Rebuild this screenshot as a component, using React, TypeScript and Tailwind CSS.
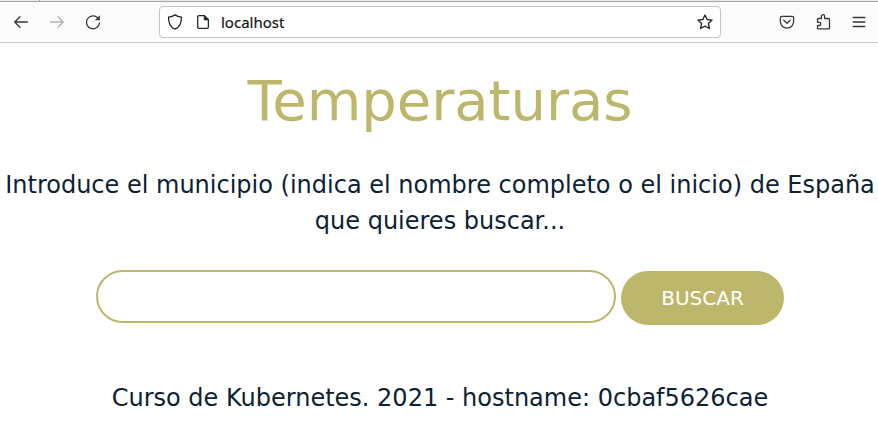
import React from "react";

type IconProps = { className?: string; children: React.ReactNode };

function Icon({ className = "", children }: IconProps) {
  return (
    <svg
      viewBox="0 0 16 16"
      fill="none"
      stroke="currentColor"
      strokeWidth="1.3"
      strokeLinecap="round"
      strokeLinejoin="round"
      className={`block size-4 shrink-0 ${className}`}
    >
      {children}
    </svg>
  );
}

function Toolbar() {
  return (
    <header className="flex h-[43px] items-center border-b border-[#c8c8cb] bg-[#fbfbfb] pt-px text-[#37373c]">
      <div className="flex w-[159px] shrink-0 items-center gap-5 pl-[13px]">
        <Icon>
          <path d="M14.4 8H1.7M7 2.7 1.7 8 7 13.3" />
        </Icon>
        <Icon className="text-[#b0b0b2]">
          <path d="M1.6 8h12.7M9 2.7 14.3 8 9 13.3" />
        </Icon>
        <Icon>
          <path d="M12.8 3.9A6.5 6.5 0 1 0 14.5 8.8" />
          <path d="M14.9 1.3v5H9.9z" fill="currentColor" stroke="none" />
        </Icon>
      </div>
      <div className="flex h-8 w-[562px] items-center rounded border border-[#c4c4c6] bg-white px-[7px] text-[#242428]">
        <Icon>
          <path d="M8 .9c1.8 1.3 4 2 6.4 2.2C14.7 8.4 13 13 8 15.1 3 13 1.3 8.4 1.6 3.1 4 2.9 6.2 2.2 8 .9z" />
        </Icon>
        <Icon className="ml-3">
          <path d="M4 1.7h5.4l4 4V13c0 .8-.5 1.3-1.3 1.3H4c-.8 0-1.3-.5-1.3-1.3V3c0-.8.5-1.3 1.3-1.3z" />
          <path d="M9.2 1.7v4.2h4.2z" fill="currentColor" strokeWidth=".8" />
        </Icon>
        <span className="ml-[10px] font-['Noto_Sans',sans-serif] text-[15px] leading-5 text-[#15141a] [-webkit-text-stroke:0.2px_#15141a]">
          localhost
        </span>
        <Icon className="ml-auto">
          <path d="m8 1 2.1 4.5 5 .6-3.7 3.4 1 5L8 12.1l-4.400 2.4 1-5L.9 6.1l5-.6z" />
        </Icon>
      </div>
      <div className="flex flex-1 items-center justify-end gap-5 pr-[11px]">
        <Icon>
          <path d="M2.9 2.3h10.2c.9 0 1.500.6 1.500 1.500V7.500a6.600 6.600 0 0 1-13.200 0V3.800c0-.9.6-1.500 1.500-1.500z" />
          <path d="m4.8 6.3 3.2 3 3.2-3" />
        </Icon>
        <Icon>
          <path d="M6.400 4.500V2.300a1.600 1.600 0 0 1 3.200 0v2.200h4c.6 0 .9.3.9.9v8.500c0 .6-.3.9-.9.9H3.400c-.6 0-.9-.3-.9-.9v-2.400h1.700a1.600 1.600 0 0 0 0-3.200H2.500V5.400c0-.6.3-.9.9-.9z" />
        </Icon>
        <Icon>
          <path d="M2.2 3.5h11.6M2.200 8h11.600M2.200 12.500h11.600" />
        </Icon>
      </div>
    </header>
  );
}

export default function App() {
  return (
    <div className="relative flex h-[433px] w-[878px] flex-col overflow-hidden bg-white">
      <div className="absolute inset-x-0 top-0 h-0.5 border-b border-[#a3a3a5] bg-[#ebebeb]" />
      <div className="absolute left-[39px] top-0 h-px w-px bg-[#a3a3a5]" />
      <Toolbar />
      <main className="flex flex-col items-center pl-0.5 font-['DejaVu_Sans',sans-serif] text-[#0c2233]">
        <h1 className="mt-[25px] text-[56px] leading-[66px] text-[#bdb76b]">Temperaturas</h1>
        <p className="mt-[33px] whitespace-nowrap text-center text-2xl leading-9">
          Introduce el municipio (indica el nombre completo o el inicio) de España
          <br />
          que quieres buscar...
        </p>
        <form className="mt-[31px] flex gap-[5px]" onSubmit={(e) => e.preventDefault()}>
          <input
            aria-label="Municipio"
            className="h-[53px] w-[520px] rounded-full border-2 border-[#bdb76b] bg-white px-6 text-xl outline-none"
          />
          <button className="mt-px h-[54px] w-[163px] rounded-full bg-[#bdb76b] text-center text-xl text-white">
            BUSCAR
          </button>
        </form>
        <footer className="mt-[55px] text-2xl leading-9">
          Curso de Kubernetes. 2021 - hostname: 0cbaf5626cae
        </footer>
      </main>
    </div>
  );
}
